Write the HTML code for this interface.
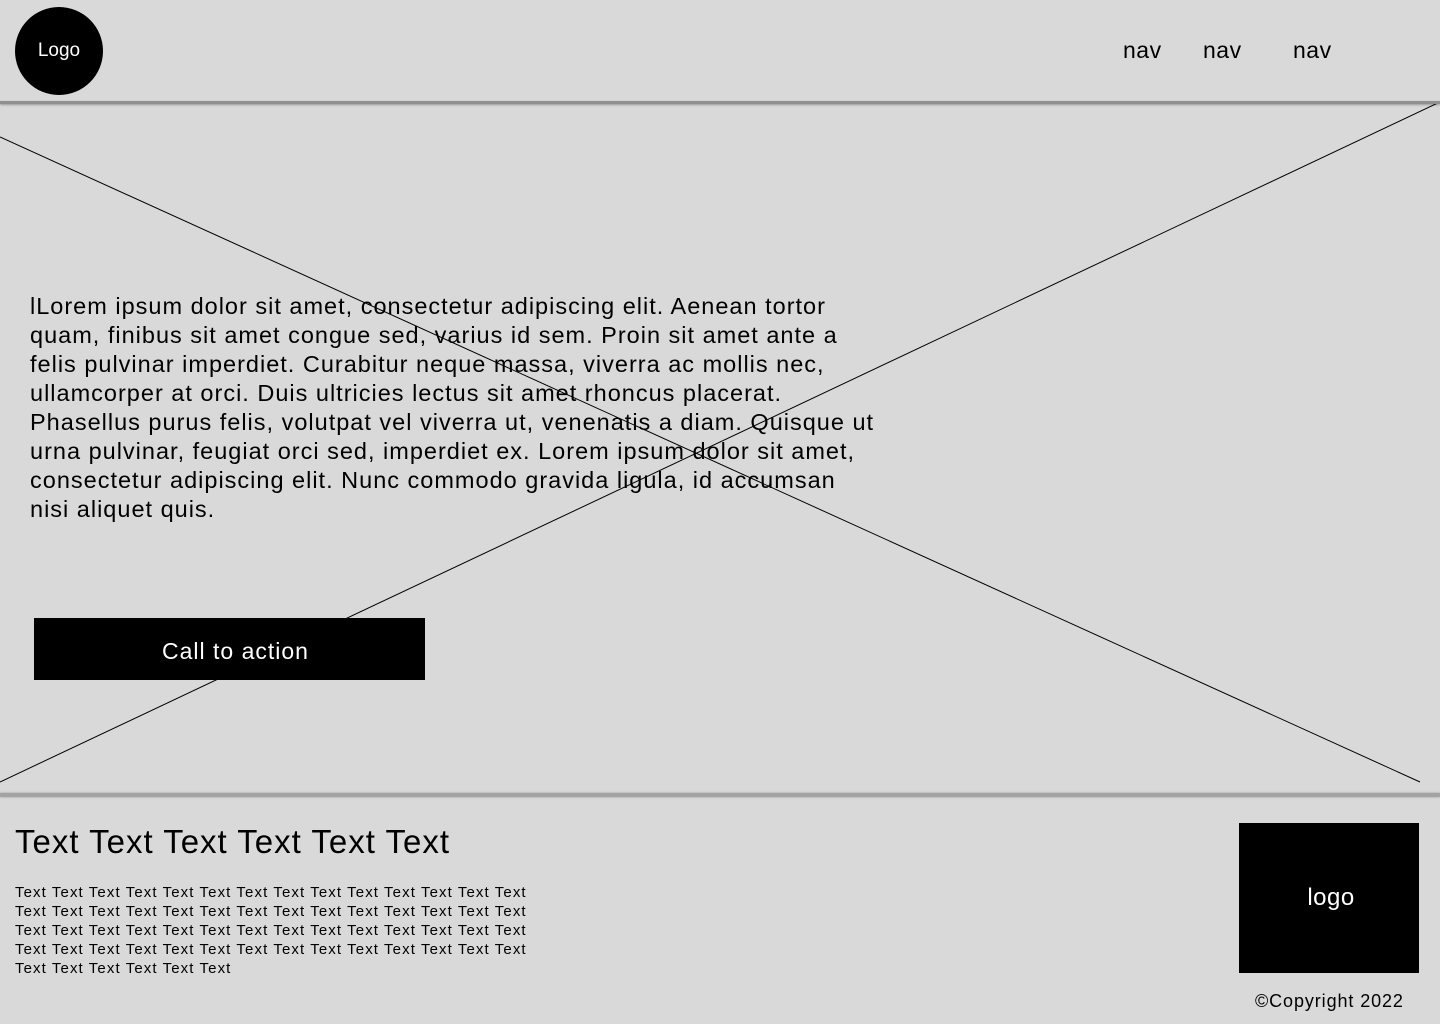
<!DOCTYPE html>
<html><head><style>
body{margin:0;width:1440px;height:1024px;background:#d9d9d9;font-family:"Liberation Sans",sans-serif;position:relative;overflow:hidden;color:#000}
.logo{position:absolute;left:15px;top:7px;width:88px;height:88px;border-radius:50%;background:#000;color:#fff;font-size:19px;display:flex;align-items:center;justify-content:center}
.nav{position:absolute;top:37px;font-size:23px;letter-spacing:0.5px}
.hbar{position:absolute;left:0;top:101px;width:1440px;height:3px;background:#8f8f8f;box-shadow:0 1px 2px rgba(0,0,0,.3)}
.fbar{position:absolute;left:0;top:793px;width:1440px;height:4px;background:#a3a3a3;box-shadow:0 0 2px rgba(0,0,0,.3)}
svg{position:absolute;left:0;top:0}
.txt{position:absolute;left:30px;top:292px;font-size:23.5px;line-height:29px;white-space:nowrap;letter-spacing:1px}
.cta{position:absolute;left:34px;top:618px;width:391px;height:62px;background:#000;color:#fff;font-size:23px;letter-spacing:1px;display:flex;align-items:center;justify-content:center;padding-top:4px;box-sizing:border-box;padding-left:12px}
.h2{position:absolute;left:15px;top:823px;font-size:33px;letter-spacing:1px}
.small{position:absolute;left:15px;top:883px;font-size:15px;line-height:19px;white-space:nowrap;letter-spacing:1.1px}
.flogo{position:absolute;left:1239px;top:823px;width:180px;height:150px;background:#000;color:#fff;font-size:24px;letter-spacing:0.5px;display:flex;align-items:center;justify-content:center;padding-left:4px;box-sizing:border-box}
.copy{position:absolute;left:1255px;top:991px;font-size:18px;letter-spacing:0.9px}
</style></head><body>
<svg width="1440" height="1024"><line x1="0" y1="137" x2="1420" y2="782" stroke="#000" stroke-width="1"/><line x1="0" y1="782" x2="1440" y2="102" stroke="#000" stroke-width="1"/></svg>
<div class="logo">Logo</div>
<div class="nav" style="left:1123px">nav</div>
<div class="nav" style="left:1203px">nav</div>
<div class="nav" style="left:1293px">nav</div>
<div class="hbar"></div>
<div class="txt">lLorem ipsum dolor sit amet, consectetur adipiscing elit. Aenean tortor<br>quam, finibus sit amet congue sed, varius id sem. Proin sit amet ante a<br>felis pulvinar imperdiet. Curabitur neque massa, viverra ac mollis nec,<br>ullamcorper at orci. Duis ultricies lectus sit amet rhoncus placerat.<br>Phasellus purus felis, volutpat vel viverra ut, venenatis a diam. Quisque ut<br>urna pulvinar, feugiat orci sed, imperdiet ex. Lorem ipsum dolor sit amet,<br>consectetur adipiscing elit. Nunc commodo gravida ligula, id accumsan<br>nisi aliquet quis.</div>
<div class="cta">Call to action</div>
<div class="fbar"></div>
<div class="h2">Text Text Text Text Text Text</div>
<div class="small">Text Text Text Text Text Text Text Text Text Text Text Text Text Text<br>Text Text Text Text Text Text Text Text Text Text Text Text Text Text<br>Text Text Text Text Text Text Text Text Text Text Text Text Text Text<br>Text Text Text Text Text Text Text Text Text Text Text Text Text Text<br>Text Text Text Text Text Text</div>
<div class="flogo">logo</div>
<div class="copy">©Copyright 2022</div>
</body></html>
